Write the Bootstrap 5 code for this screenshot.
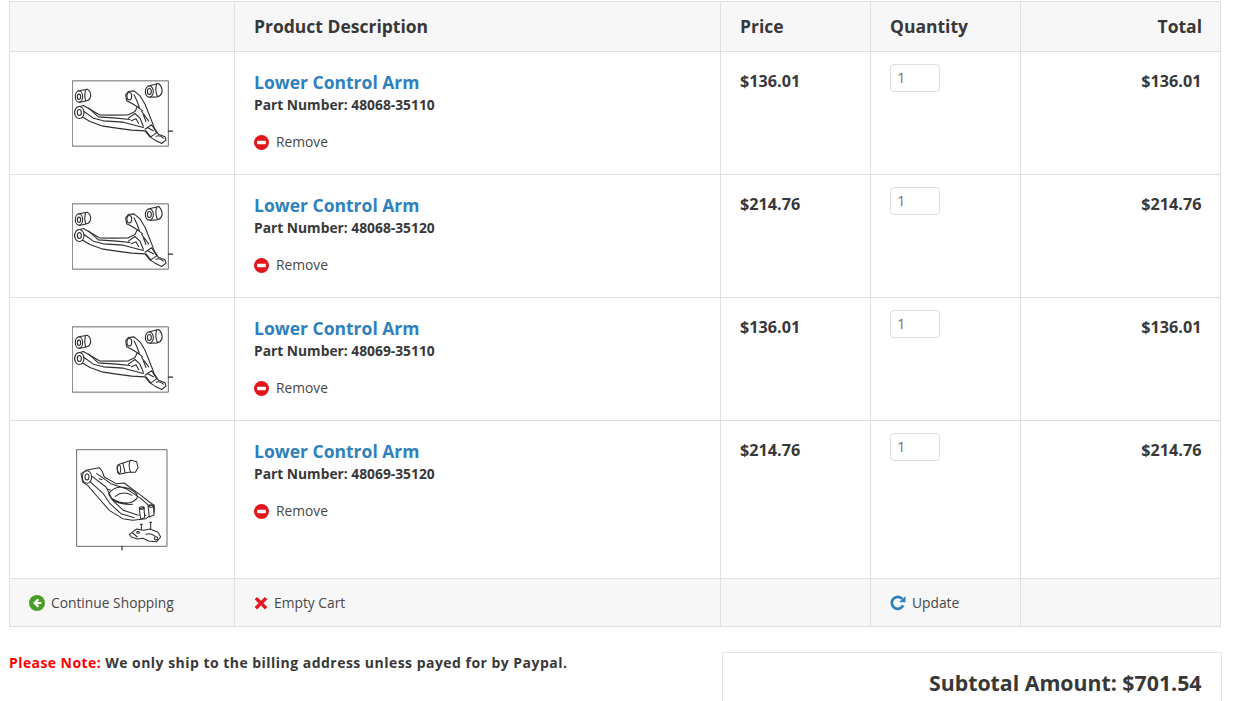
<!DOCTYPE html>
<html lang="en"><head><meta charset="utf-8"><title>Cart</title>
<link href="https://cdn.jsdelivr.net/npm/bootstrap@5.3.0/dist/css/bootstrap.min.css" rel="stylesheet">
<style>
html,body{overflow:hidden;height:701px}
body{font-family:"Open Sans",sans-serif;color:#383838;font-size:14px}
.page-wrap{padding:1px 17px 0 9px}
.cart{table-layout:fixed;width:1211px;--bs-table-border-color:#e0e0e0;margin:0;--bs-table-color:#383838;border-color:#e0e0e0}
.cart th,.cart td{padding:0 19px;color:#383838}
.cart th.text-end{padding-right:18px}
.cart td.text-end{padding-right:18.500px}
.cart thead th,.cart tfoot td{background:#f7f7f7}
.cart thead th{height:50px;font-size:17.5px;font-weight:700;vertical-align:middle;line-height:24px;padding-bottom:2px}
.cart tbody td{vertical-align:top;padding-top:18px}
.cart tbody tr{height:123px}
.cart tbody tr.tall{height:158px}
.cart tfoot td{height:48px;vertical-align:middle;line-height:20px}
.c1{width:225px}.c2{width:486px}.c3,.c4{width:150px}.c5{width:200px}
.cart td.imgcell{padding:28px 0 0 0}
.partpic{display:block;margin-left:62px;filter:blur(.35px)}
.partpic.low{margin-left:66px}
.plink{font-size:17.5px;font-weight:700;color:#2f81bd;text-decoration:none;line-height:24px;display:block}
.pnum{font-size:13.8px;font-weight:700;line-height:20px;margin-top:1px}
.act{display:flex;align-items:center;gap:6px;color:#484848;text-decoration:none;font-size:13.8px;line-height:20px}
.rm{margin-top:17px;gap:7px}
.money{font-size:16.2px;font-weight:700;line-height:22px}
.qty{width:50px;height:28px;border:1px solid #ddd;border-radius:4px;padding:0 6px 2px;font-size:15px;color:#777;margin-top:-6px;display:block;background:#fff;font-family:"Open Sans",sans-serif}
.note{font-size:14px;font-weight:700;margin:0;padding:1px 0 0 0;line-height:20px;letter-spacing:.47px}
.note b{color:#f00;font-weight:700;letter-spacing:.42px}
.sumbox{width:500px;height:120px;border:1px solid #e5e5e5;margin-right:-1px;padding:16px 19.500px;text-align:right;font-size:21.300px;font-weight:700;line-height:28px}
.lower{margin-top:25px;display:flex;justify-content:space-between;align-items:flex-start}
</style></head><body>
<svg width="0" height="0" class="d-block position-absolute">
<defs>
<symbol id="armA" viewBox="36 28 303 200">
<g fill="none" stroke="#2e2e2e" stroke-width="3.300" stroke-linejoin="round" stroke-linecap="round">
<rect x="38" y="30" width="287" height="196" fill="#fdfdfd" stroke="#555" stroke-width="2.600"/>
<path d="M325 181h14"/>
<path d="M57 60L82 55Q92 60 92 75Q90 88 80 90L58 95"/><ellipse cx="57" cy="77" rx="11" ry="17" fill="#fff"/><ellipse cx="57" cy="78" rx="5" ry="8"/><path d="M76 58Q72 75 77 90"/>
<path d="M268 45L296 38Q308 48 306 65Q302 76 292 78L270 79"/><ellipse cx="268" cy="62" rx="12" ry="17" fill="#fff"/><ellipse cx="268" cy="62" rx="6" ry="9"/><path d="M290 40Q284 58 292 76"/>
<path d="M50 110L70 104L95 118L118 132L160 133L205 132L225 122L232 108L215 97L200 90L197 72L205 62L222 60L240 75L255 100L265 125L275 150L283 172L295 190L315 198L318 208L305 218L285 208L270 198L255 180L215 178L170 172L125 165L90 152L70 140L50 138L43 125Z" fill="#fff"/>
<ellipse cx="58" cy="125" rx="14" ry="18" fill="#fff"/><ellipse cx="58" cy="125" rx="6" ry="9"/>
<ellipse cx="208" cy="76" rx="7" ry="11"/>
<path d="M72 122L100 142L130 150L190 154L250 170M86 112L115 138L170 142L210 146M205 142L225 128L240 142L250 166M214 150L228 144L236 158M245 122L266 150M250 132L258 152M232 108L248 120M255 175L275 162L290 186L272 198L258 180M262 170L280 180M288 196Q300 192 310 202M222 72Q232 90 238 110"/>
</g></symbol>
<symbol id="armB" viewBox="30 26 276 306">
<g fill="none" stroke="#2e2e2e" stroke-width="3.100" stroke-linejoin="round" stroke-linecap="round">
<rect x="33" y="28" width="270" height="290" fill="#fdfdfd" stroke="#555" stroke-width="2.600"/>
<path d="M168 318v11" stroke-width="3.600"/>
<path d="M160 72L196 60L212 64L216 82L208 96L188 96L160 102Q152 90 153 80Q155 74 160 72Z" fill="#fff"/><ellipse cx="159" cy="87" rx="5" ry="13"/><path d="M171 69L177 97M192 62Q186 78 194 96"/>
<path d="M45 100L60 90L100 82L108 92L115 110L150 130L175 128L190 140L225 165L250 185L265 195L265 215L240 235L200 240L170 235L130 210L95 170L65 135L50 125Z" fill="#fff"/>
<ellipse cx="63" cy="110" rx="14" ry="19" fill="#fff"/><ellipse cx="63" cy="110" rx="6" ry="9"/>
<path d="M78 108L120 140L140 180L172 210L215 224L240 225M72 124L112 160L132 190L165 220L205 232M92 100L135 130L180 145L225 175L248 195M128 160Q150 130 190 145Q220 160 212 175Q195 195 160 185Q130 175 128 160ZM148 168Q170 150 198 165M135 175Q160 195 200 192M100 115l8 3M125 147l8 2"/>
<path d="M220 206L234 200L236 232L224 236ZM246 196L262 194L264 224L250 230Z" fill="#fff"/><ellipse cx="227" cy="203" rx="7" ry="4"/><ellipse cx="255" cy="197" rx="7" ry="4"/>
<path d="M190 282L212 266L232 270L252 266L276 276L284 290L272 304L248 302L230 294L214 296L196 290Z" fill="#fff"/><path d="M226 268V252M223 252h6M254 266V246M251 246h6M200 278L214 290M240 282Q254 276 268 288"/><ellipse cx="216" cy="276" rx="4" ry="3"/><ellipse cx="270" cy="294" rx="5" ry="5"/>
</g></symbol>
<symbol id="icoRm" viewBox="0 0 16 16"><circle cx="8" cy="8" r="8" fill="#e2171d"/><rect x="3.300" y="6.200" width="9.400" height="3.600" rx=".8" fill="#fff"/></symbol>
</defs></svg>
<div class="page-wrap">
<table class="table table-bordered cart">
<colgroup><col class="c1"><col class="c2"><col class="c3"><col class="c4"><col class="c5"></colgroup>
<thead><tr><th></th><th>Product Description</th><th>Price</th><th>Quantity</th><th class="text-end">Total</th></tr></thead>
<tbody>
<tr><td class="imgcell"><svg class="partpic" width="101" height="67"><use href="#armA"/></svg></td><td><a class="plink" href="#">Lower Control Arm</a><div class="pnum">Part Number: 48068-35110</div><a class="act rm" href="#"><svg width="15" height="15"><use href="#icoRm"/></svg>Remove</a></td><td class="money">$136.01</td><td><input class="qty" value="1"></td><td class="money text-end">$136.01</td></tr>
<tr><td class="imgcell"><svg class="partpic" width="101" height="67"><use href="#armA"/></svg></td><td><a class="plink" href="#">Lower Control Arm</a><div class="pnum">Part Number: 48068-35120</div><a class="act rm" href="#"><svg width="15" height="15"><use href="#icoRm"/></svg>Remove</a></td><td class="money">$214.76</td><td><input class="qty" value="1"></td><td class="money text-end">$214.76</td></tr>
<tr><td class="imgcell"><svg class="partpic" width="101" height="67"><use href="#armA"/></svg></td><td><a class="plink" href="#">Lower Control Arm</a><div class="pnum">Part Number: 48069-35110</div><a class="act rm" href="#"><svg width="15" height="15"><use href="#icoRm"/></svg>Remove</a></td><td class="money">$136.01</td><td><input class="qty" value="1"></td><td class="money text-end">$136.01</td></tr>
<tr class="tall"><td class="imgcell"><svg class="partpic low" width="92" height="102"><use href="#armB"/></svg></td><td><a class="plink" href="#">Lower Control Arm</a><div class="pnum">Part Number: 48069-35120</div><a class="act rm" href="#"><svg width="15" height="15"><use href="#icoRm"/></svg>Remove</a></td><td class="money">$214.76</td><td><input class="qty" value="1"></td><td class="money text-end">$214.76</td></tr>
</tbody>
<tfoot><tr>
<td><a class="act" href="#"><svg width="16" height="16" viewBox="0 0 16 16"><circle cx="8" cy="8" r="8" fill="#4a9e28"/><path d="M8.600 3.400L4 8l4.600 4.600 1.600-1.600-1.900-1.900H12.400V6.900H8.300l1.900-1.900z" fill="#fff"/></svg>Continue Shopping</a></td>
<td><a class="act" href="#"><svg width="14" height="14" viewBox="0 0 14 14"><path d="M3.100.9L7 4.800 10.900.9 13.300 3.300 9.400 7.200l3.900 3.900-2.400 2.400L7 9.600l-3.900 3.900L.7 11.100 4.600 7.200.7 3.300z" fill="#e2171d"/></svg>Empty Cart</a></td>
<td></td>
<td><a class="act" href="#"><svg width="16" height="16" viewBox="0 0 16 16"><path d="M13.200 10.400A6 6 0 1 1 12.300 3.900" fill="none" stroke="#2f81bd" stroke-width="2.700"/><path d="M15.500 1v6.300H9.200z" fill="#2f81bd"/></svg>Update</a></td>
<td></td>
</tr></tfoot>
</table>
<div class="lower">
<p class="note"><b>Please Note:</b> We only ship to the billing address unless payed for by Paypal.</p>
<div class="sumbox">Subtotal Amount: $701.54</div>
</div>
</div>
<script src="https://cdn.jsdelivr.net/npm/bootstrap@5.3.0/dist/js/bootstrap.bundle.min.js"></script>
</body></html>
